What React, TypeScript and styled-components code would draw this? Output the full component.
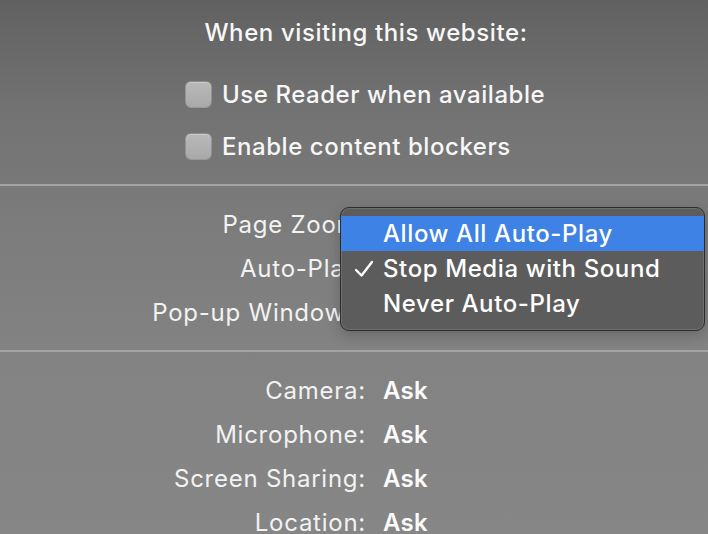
import React from "react";
import styled, { createGlobalStyle } from "styled-components";

const Global = createGlobalStyle`
  html, body { margin: 0; padding: 0; }
  body {
    width: 708px;
    height: 534px;
    overflow: hidden;
    font-family: Inter, "Noto Sans", sans-serif;
    -webkit-font-smoothing: antialiased;
  }
`;

const Page = styled.div`
  position: relative;
  width: 708px;
  height: 534px;
  overflow: hidden;
  background: linear-gradient(to bottom, #616161 0%, #727272 20%, #7d7d7d 45%, #838383 70%, #868686 100%);
  color: #f7f7f7;
  display: flex;
  flex-direction: column;
  & > * { flex-shrink: 0; }
`;

const Top = styled.div`
  display: flex;
  flex-direction: column;
  align-items: center;
  padding: 20px 0 20px;
`;

const Title = styled.div`
  font-size: 24px;
  letter-spacing: 0.6px;
  line-height: 26px;
  font-weight: 500;
  margin: 0 0 30px 24px;
`;

const CheckList = styled.div`
  display: flex;
  flex-direction: column;
  gap: 16px;
  align-self: flex-start;
  margin-left: 185px;
`;

const CheckRow = styled.label`
  display: flex;
  align-items: center;
  gap: 10px;
  height: 36px;
  font-size: 24px;
  letter-spacing: 0.55px;
  font-weight: 500;
`;

const Box = styled.span`
  width: 27px;
  height: 27px;
  box-sizing: border-box;
  border-radius: 6px;
  background: linear-gradient(to bottom, #b9b9b9, #a9a9a9);
  border: 1px solid rgba(60, 60, 60, 0.25);
  box-shadow: inset 0 1px 0 rgba(255, 255, 255, 0.25);
`;

const Divider = styled.div`
  height: 2px;
  background: #a3a3a3;
`;

const Section = styled.div`
  display: grid;
  grid-template-columns: 366px 1fr;
  column-gap: 17px;
  grid-auto-rows: 44px;
  padding: 16px 0;
  align-items: center;
`;

const Label = styled.div`
  text-align: right;
  font-size: 24px;
  letter-spacing: 0.75px;
  font-weight: 400;
  color: #f2f2f2;
  white-space: nowrap;
`;

const Value = styled.div`
  font-size: 24px;
  letter-spacing: 0.3px;
  font-weight: 600;
  color: #fafafa;
  white-space: nowrap;
`;

const Menu = styled.div`
  position: absolute;
  left: 340px;
  top: 207px;
  width: 365px;
  box-sizing: border-box;
  padding: 8px 0 9px;
  border-radius: 9px;
  background: #5c5c5c;
  border: 1px solid #2c2c2c;
  box-shadow: inset 0 0 0 1px rgba(255, 255, 255, 0.12), 0 4px 14px rgba(0, 0, 0, 0.2);
  display: flex;
  flex-direction: column;
`;

const Item = styled.div<{ $active?: boolean }>`
  position: relative;
  height: 35px;
  display: flex;
  align-items: center;
  padding-left: 42px;
  font-size: 24px;
  letter-spacing: 0.6px;
  font-weight: 500;
  color: #ffffff;
  background: ${(p) => (p.$active ? "#3f82e6" : "transparent")};
`;

const Check = styled.svg`
  position: absolute;
  left: 13px;
  top: 50%;
  transform: translateY(-50%);
`;

export default function App() {
  return (
    <Page>
      <Global />
      <Top>
        <Title>When visiting this website:</Title>
        <CheckList>
          <CheckRow>
            <Box />
            Use Reader when available
          </CheckRow>
          <CheckRow>
            <Box />
            Enable content blockers
          </CheckRow>
        </CheckList>
      </Top>
      <Divider />
      <Section>
        <Label>Page Zoom:</Label>
        <Value>100%</Value>
        <Label>Auto-Play:</Label>
        <Value>Stop Media with Sound</Value>
        <Label>Pop-up Windows:</Label>
        <Value>Block and Notify</Value>
      </Section>
      <Divider />
      <Section>
        <Label>Camera:</Label>
        <Value>Ask</Value>
        <Label>Microphone:</Label>
        <Value>Ask</Value>
        <Label>Screen Sharing:</Label>
        <Value>Ask</Value>
        <Label>Location:</Label>
        <Value>Ask</Value>
      </Section>
      <Menu>
        <Item $active>Allow All Auto-Play</Item>
        <Item>
          <Check width="20" height="18" viewBox="0 0 20 18">
            <path d="M2 10 L7.5 15.5 L18 2" fill="none" stroke="#ffffff" strokeWidth="2.4" strokeLinecap="round" strokeLinejoin="round" />
          </Check>
          Stop Media with Sound
        </Item>
        <Item>Never Auto-Play</Item>
      </Menu>
    </Page>
  );
}
